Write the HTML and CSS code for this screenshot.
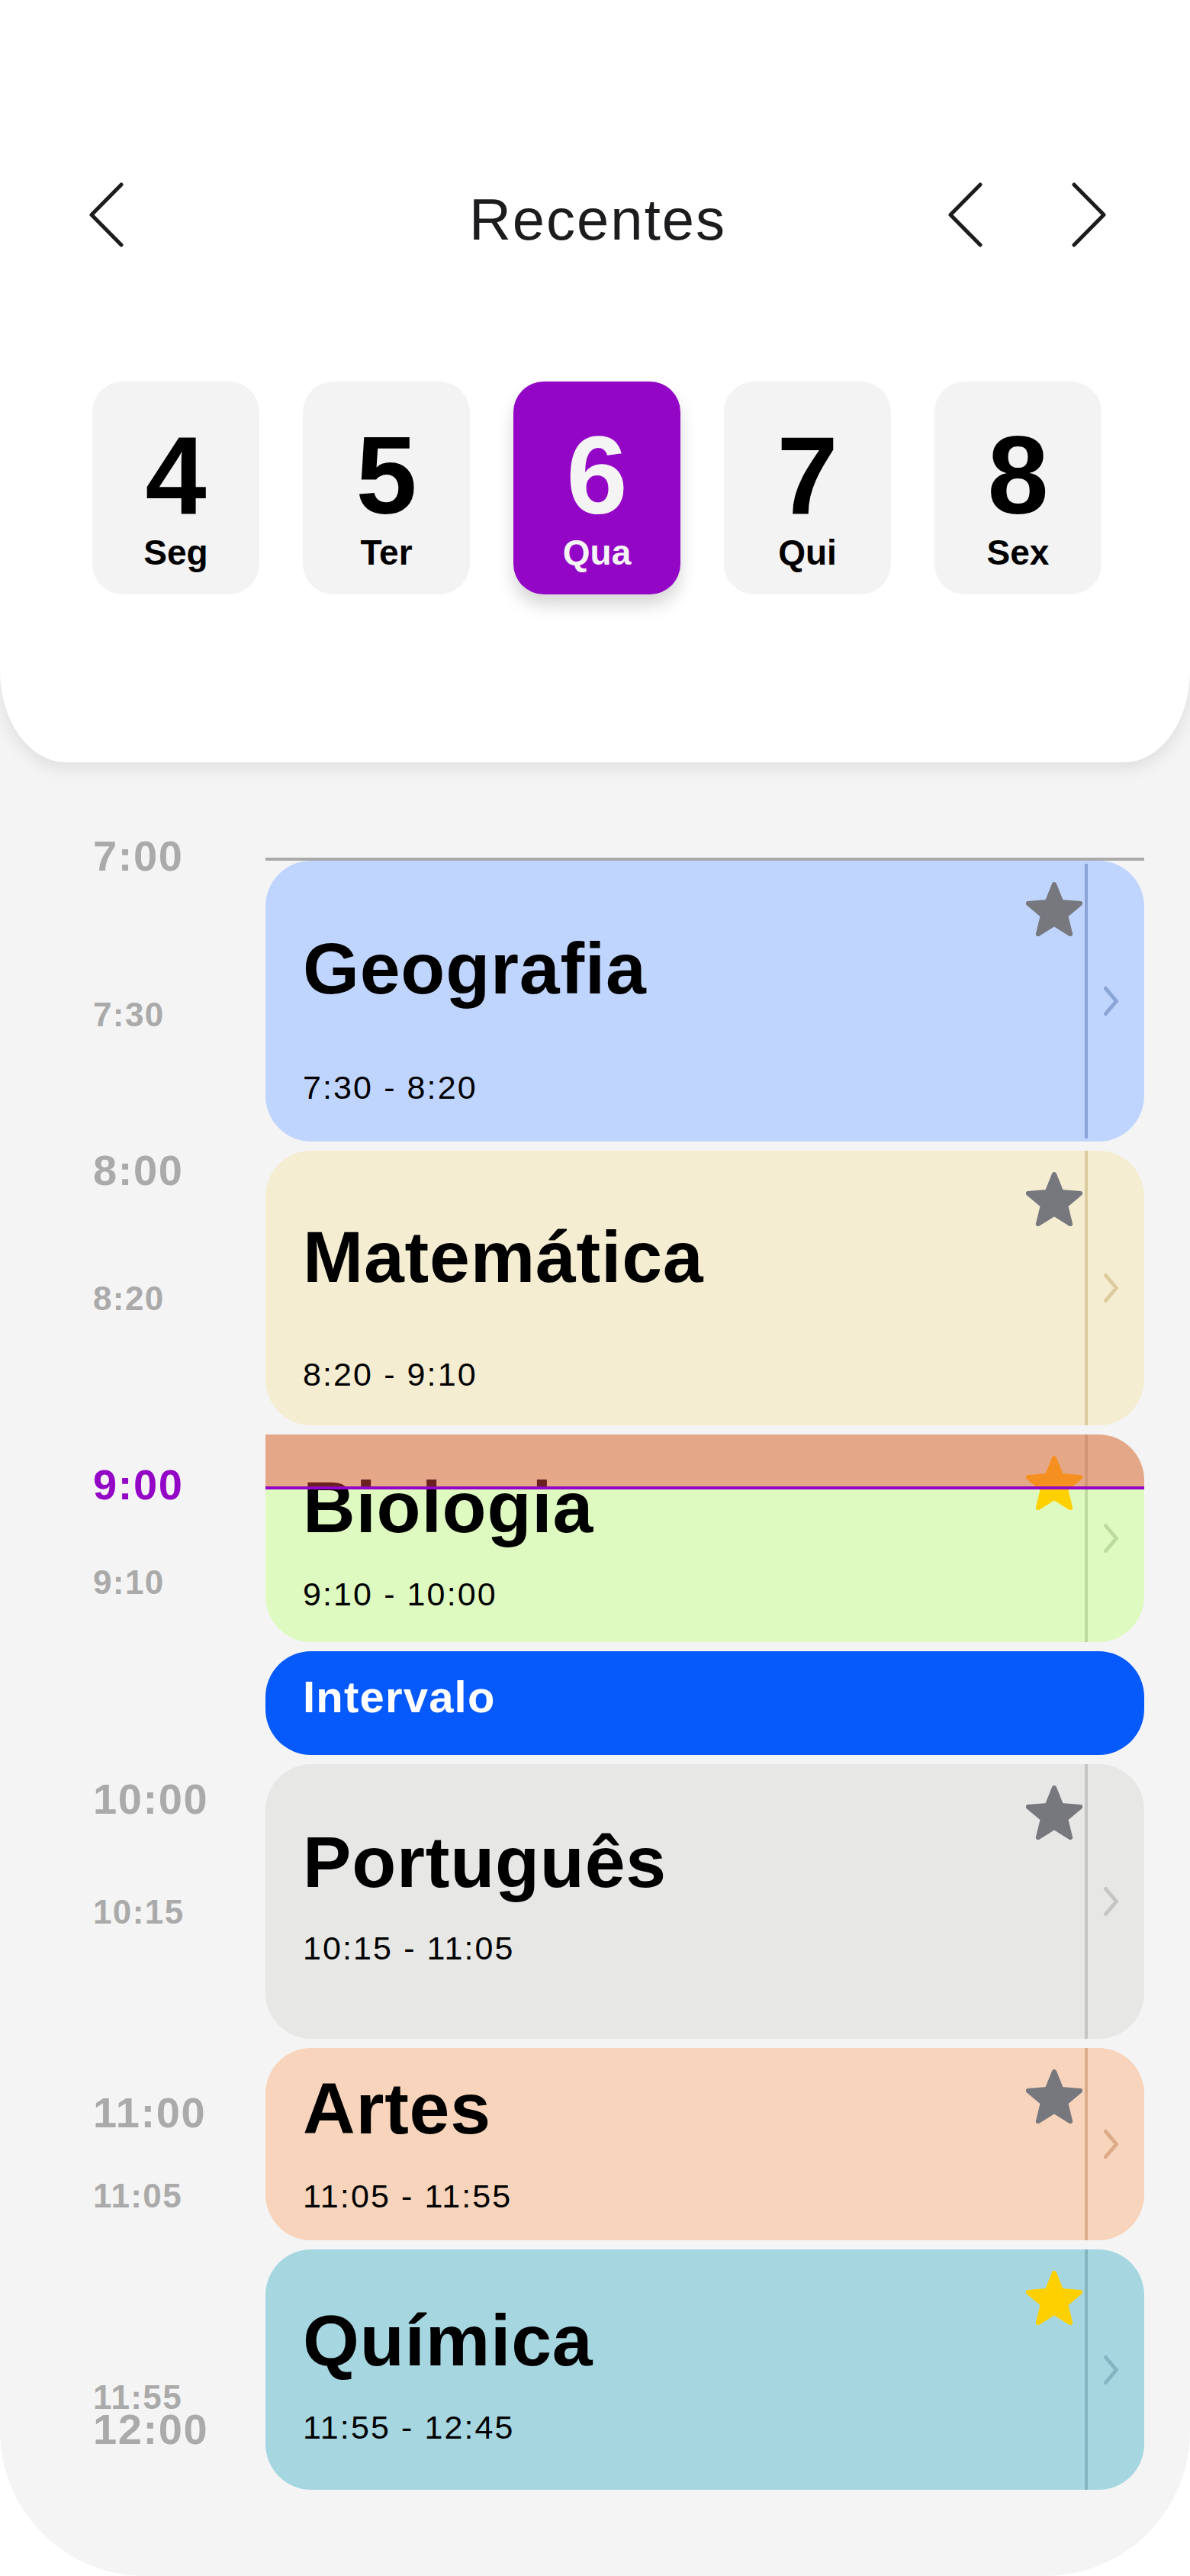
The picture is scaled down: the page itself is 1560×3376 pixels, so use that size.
FILE: index.html
```html
<!DOCTYPE html>
<html lang="pt">
<head>
<meta charset="utf-8">
<title>Recentes</title>
<link rel="stylesheet" href="styles.css">
</head>
<body>
<div class="screen">
  <header class="top">
    <nav class="nav">
      <button class="nav-btn nav-back" aria-label="Voltar">
        <svg class="chev-lg" viewBox="0 0 47 87"><path d="M43 4 L4 43.5 L43 83"/></svg>
      </button>
      <h1 class="nav-title">Recentes</h1>
      <div class="nav-pager">
        <button class="nav-btn" aria-label="Anterior">
          <svg class="chev-lg" viewBox="0 0 47 87"><path d="M43 4 L4 43.5 L43 83"/></svg>
        </button>
        <button class="nav-btn" aria-label="Próximo">
          <svg class="chev-lg" viewBox="0 0 47 87"><path d="M4 4 L43 43.5 L4 83"/></svg>
        </button>
      </div>
    </nav>
    <ul class="days">
      <li class="day"><span class="day-num">4</span><span class="day-name">Seg</span></li>
      <li class="day"><span class="day-num">5</span><span class="day-name">Ter</span></li>
      <li class="day day--active"><span class="day-num">6</span><span class="day-name">Qua</span></li>
      <li class="day"><span class="day-num">7</span><span class="day-name">Qui</span></li>
      <li class="day"><span class="day-num">8</span><span class="day-name">Sex</span></li>
    </ul>
  </header>

  <section class="timeline">
    <div class="axis">
      <span class="tick tick--major" style="top:-23px">7:00</span>
      <span class="tick tick--minor" style="top:189px">7:30</span>
      <span class="tick tick--major" style="top:389px">8:00</span>
      <span class="tick tick--minor" style="top:561px">8:20</span>
      <span class="tick tick--major tick--now" style="top:801px">9:00</span>
      <span class="tick tick--minor" style="top:933px">9:10</span>
      <span class="tick tick--major" style="top:1213px">10:00</span>
      <span class="tick tick--minor" style="top:1365px">10:15</span>
      <span class="tick tick--major" style="top:1624px">11:00</span>
      <span class="tick tick--minor" style="top:1737px">11:05</span>
      <span class="tick tick--minor" style="top:2001px">11:55</span>
      <span class="tick tick--major" style="top:2039px">12:00</span>
    </div>

    <div class="lane">
      <div class="rule"></div>
      <div class="lessons">
        <article class="lesson lesson--geo">
          <div class="lesson-main">
            <div class="lesson-text">
              <h2 class="lesson-title">Geografia</h2>
              <p class="lesson-time">7:30 - 8:20</p>
            </div>
            <svg class="star" viewBox="0 0 74 71"><polygon points="37,3 46.4,26.06 71.24,27.88 52.22,43.94 58.16,68.12 37,55 15.84,68.12 21.78,43.94 2.76,27.88 27.6,26.06"/></svg>
          </div>
          <div class="lesson-side"><svg class="chev-sm" viewBox="0 0 21 40"><path d="M3.5 3.5 L17.5 20 L3.5 36.5"/></svg></div>
        </article>

        <article class="lesson lesson--mat">
          <div class="lesson-main">
            <div class="lesson-text">
              <h2 class="lesson-title">Matemática</h2>
              <p class="lesson-time">8:20 - 9:10</p>
            </div>
            <svg class="star" viewBox="0 0 74 71"><polygon points="37,3 46.4,26.06 71.24,27.88 52.22,43.94 58.16,68.12 37,55 15.84,68.12 21.78,43.94 2.76,27.88 27.6,26.06"/></svg>
          </div>
          <div class="lesson-side"><svg class="chev-sm" viewBox="0 0 21 40"><path d="M3.5 3.5 L17.5 20 L3.5 36.5"/></svg></div>
        </article>

        <article class="lesson lesson--bio">
          <div class="lesson-main">
            <div class="lesson-text">
              <h2 class="lesson-title">Biologia</h2>
              <p class="lesson-time">9:10 - 10:00</p>
            </div>
            <svg class="star star--on" viewBox="0 0 74 71"><polygon points="37,3 46.4,26.06 71.24,27.88 52.22,43.94 58.16,68.12 37,55 15.84,68.12 21.78,43.94 2.76,27.88 27.6,26.06"/></svg>
          </div>
          <div class="lesson-side"><svg class="chev-sm" viewBox="0 0 21 40"><path d="M3.5 3.5 L17.5 20 L3.5 36.5"/></svg></div>
          <div class="past-shade"></div>
          <div class="now-line"></div>
        </article>

        <div class="break">Intervalo</div>

        <article class="lesson lesson--por">
          <div class="lesson-main">
            <div class="lesson-text">
              <h2 class="lesson-title">Português</h2>
              <p class="lesson-time">10:15 - 11:05</p>
            </div>
            <svg class="star" viewBox="0 0 74 71"><polygon points="37,3 46.4,26.06 71.24,27.88 52.22,43.94 58.16,68.12 37,55 15.84,68.12 21.78,43.94 2.76,27.88 27.6,26.06"/></svg>
          </div>
          <div class="lesson-side"><svg class="chev-sm" viewBox="0 0 21 40"><path d="M3.5 3.5 L17.5 20 L3.5 36.5"/></svg></div>
        </article>

        <article class="lesson lesson--art">
          <div class="lesson-main">
            <div class="lesson-text">
              <h2 class="lesson-title">Artes</h2>
              <p class="lesson-time">11:05 - 11:55</p>
            </div>
            <svg class="star" viewBox="0 0 74 71"><polygon points="37,3 46.4,26.06 71.24,27.88 52.22,43.94 58.16,68.12 37,55 15.84,68.12 21.78,43.94 2.76,27.88 27.6,26.06"/></svg>
          </div>
          <div class="lesson-side"><svg class="chev-sm" viewBox="0 0 21 40"><path d="M3.5 3.5 L17.5 20 L3.5 36.5"/></svg></div>
        </article>

        <article class="lesson lesson--qui">
          <div class="lesson-main">
            <div class="lesson-text">
              <h2 class="lesson-title">Química</h2>
              <p class="lesson-time">11:55 - 12:45</p>
            </div>
            <svg class="star star--on" viewBox="0 0 74 71"><polygon points="37,3 46.4,26.06 71.24,27.88 52.22,43.94 58.16,68.12 37,55 15.84,68.12 21.78,43.94 2.76,27.88 27.6,26.06"/></svg>
          </div>
          <div class="lesson-side"><svg class="chev-sm" viewBox="0 0 21 40"><path d="M3.5 3.5 L17.5 20 L3.5 36.5"/></svg></div>
        </article>
      </div>
    </div>
  </section>
</div>
</body>
</html>
```

FILE: styles.css
```css
* {
  box-sizing: border-box;
}

html, body {
  margin: 0;
  padding: 0;
  background: #ffffff;
}

body {
  font-family: "Liberation Sans", Arial, Helvetica, sans-serif;
  color: #000;
}

.screen {
  width: 1560px;
  min-height: 3376px;
  background: #f4f4f4;
  border-radius: 0 0 190px 190px;
  overflow: hidden;
}

/* ---------- header ---------- */
.top {
  position: relative;
  z-index: 2;
  height: 999px;
  background: #ffffff;
  border-radius: 0 0 86px 86px / 0 0 120px 120px;
  box-shadow: 0 8px 22px rgba(0, 0, 0, 0.09);
  padding-top: 236px;
}

.nav {
  display: grid;
  grid-template-columns: 1fr auto 1fr;
  align-items: center;
  height: 87px;
  padding: 0 109px 0 116px;
}

.nav-btn {
  display: block;
  border: 0;
  padding: 0;
  margin: 0;
  background: transparent;
  width: 47px;
  height: 87px;
}

.nav-back {
  justify-self: start;
}

.chev-lg {
  display: block;
  width: 47px;
  height: 87px;
  fill: none;
  stroke: #1c1c1e;
  stroke-width: 5;
  stroke-linecap: round;
  stroke-linejoin: round;
}

.nav-title {
  margin: 14px 0 0 0;
  font-size: 76px;
  line-height: 1;
  font-weight: 400;
  letter-spacing: 2px;
  color: #1c1c1e;
  text-align: center;
}

.nav-pager {
  justify-self: end;
  display: flex;
  gap: 115px;
}

.days {
  list-style: none;
  margin: 177px 0 0 0;
  padding: 0 0 0 121px;
  display: flex;
  gap: 57px;
}

.day {
  width: 219px;
  height: 279px;
  border-radius: 40px;
  background: #f3f3f3;
  display: flex;
  flex-direction: column;
  align-items: center;
  padding-top: 52px;
  font-weight: 700;
}

.day-num {
  font-size: 144px;
  line-height: 1;
}

.day-name {
  margin-top: 5px;
  font-size: 46px;
  line-height: 1;
}

.day--active {
  background: #9306c6;
  color: #f4f4f4;
  box-shadow: 0 14px 22px rgba(0, 0, 0, 0.16);
}

/* ---------- timeline ---------- */
.timeline {
  display: grid;
  grid-template-columns: 348px 1152px;
  padding-top: 125px;
  padding-bottom: 113px;
}

.axis {
  position: relative;
}

.tick {
  position: absolute;
  left: 122px;
  font-weight: 700;
  color: #aaaaaa;
  white-space: nowrap;
}

.tick--major {
  font-size: 56px;
  line-height: 42px;
  letter-spacing: 1.6px;
}

.tick--minor {
  font-size: 44px;
  line-height: 33px;
  letter-spacing: 1.4px;
}

.tick--now {
  color: #9306c6;
}

.rule {
  height: 4px;
  background: #aaaaaa;
}

.lessons {
  display: flex;
  flex-direction: column;
  gap: 12px;
}

.lesson {
  position: relative;
  display: flex;
  height: var(--h);
  background: var(--bg);
  border-radius: 60px;
}

.lesson-main {
  flex: 1;
  display: flex;
  justify-content: space-between;
  align-items: flex-start;
  padding-left: 49px;
}

.lesson-text {
  display: flex;
  flex-direction: column;
  padding-top: var(--pt);
  gap: var(--gap);
}

.lesson-title {
  margin: 0;
  font-size: 95px;
  line-height: 1;
  font-weight: 700;
  letter-spacing: 0.8px;
  white-space: nowrap;
}

.lesson-time {
  margin: 0;
  font-size: 43px;
  line-height: 1;
  font-weight: 400;
  letter-spacing: 2.1px;
  white-space: nowrap;
}

.star {
  width: 74px;
  height: 71px;
  margin-top: 28px;
  margin-right: 3px;
  fill: #77777e;
  stroke: #77777e;
  stroke-width: 6;
  stroke-linejoin: round;
}

.star--on {
  fill: #ffd000;
  stroke: #ffd000;
}

.lesson-side {
  width: 78px;
  border-left: 4px solid var(--line);
  padding-left: 20px;
  display: flex;
  align-items: center;
}

.chev-sm {
  display: block;
  width: 21px;
  height: 40px;
  fill: none;
  stroke: var(--line);
  stroke-width: 5;
  stroke-linecap: round;
  stroke-linejoin: round;
}

.lesson--geo {
  --h: 368px;
  --bg: #c0d5fe;
  --line: #8aa4d6;
  --pt: 94px;
  --gap: 87px;
}

.lesson--geo .lesson-side {
  margin: 4px 0;
}

.lesson--mat {
  --h: 360px;
  --bg: #f5edd2;
  --line: #dccb9e;
  --pt: 92px;
  --gap: 85px;
}

.lesson--bio {
  --h: 272px;
  --bg: #dffac1;
  --line: #bedb9f;
  --pt: 48px;
  --gap: 45px;
  border-top-left-radius: 0;
}

.lesson--por {
  --h: 360px;
  --bg: #e7e7e5;
  --line: #c5c5c3;
  --pt: 81px;
  --gap: 44px;
}

.lesson--art {
  --h: 252px;
  --bg: #f7d4bb;
  --line: #dcab8a;
  --pt: 32px;
  --gap: 46px;
}

.lesson--qui {
  --h: 315px;
  --bg: #a6d7e1;
  --line: #85b5c0;
  --pt: 72px;
  --gap: 45px;
}

.past-shade {
  position: absolute;
  top: 0;
  left: 0;
  right: 0;
  height: 68px;
  background: rgba(233, 70, 70, 0.46);
  border-top-right-radius: 60px;
}

.now-line {
  position: absolute;
  top: 68px;
  left: 0;
  right: 0;
  height: 4px;
  background: #9306c6;
}

.break {
  height: 136px;
  border-radius: 60px;
  background: #0659fb;
  color: #ffffff;
  padding: 31px 49px 0;
  font-size: 58px;
  line-height: 1;
  font-weight: 700;
  letter-spacing: 1.2px;
}
```
